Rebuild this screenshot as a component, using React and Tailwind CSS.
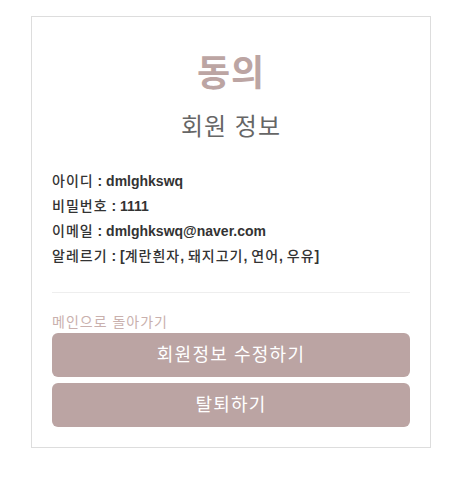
function K({ children }) {
  // Korean runs: a touch wider and lighter than the bold latin values
  return <span className="font-medium tracking-[1px]">{children}</span>
}

export default function App() {
  const font = { fontFamily: '"Liberation Sans", "Noto Sans CJK KR", sans-serif' }
  return (
    <div className="min-h-[498px] bg-white" style={font}>
      <div className="ml-[31px] mt-4 w-[400px] border border-[#dddddd] px-5 pt-[33px] pb-5">
        <h1 className="text-center text-[36px] font-bold leading-[48px] tracking-[1px] text-[#bca5a3]">동의</h1>
        <h2 className="mt-[13px] text-center text-[24px] leading-[32px] tracking-[1px] text-[#666666]">회원 정보</h2>

        <div className="mt-[26px] text-[14px] font-bold leading-[25px] text-[#333333]">
          <p><K>아이디</K> : dmlghkswq</p>
          <p><K>비밀번호</K> : 1111</p>
          <p><K>이메일</K> : dmlghkswq@naver.com</p>
          <p>
            <K>알레르기</K> : [<K>계란흰자</K>, <K>돼지고기</K>, <K>연어</K>, <K>우유</K>]
          </p>
        </div>

        <hr className="mt-[23px] border-t border-[#eeeeee]" />

        <a href="#" className="mt-[19px] block text-[14px] leading-[20px] tracking-[1px] text-[#c9b0ad]">
          메인으로 돌아가기
        </a>

        <div className="mt-px flex flex-col gap-1.5">
          <button className="h-11 w-full rounded-md bg-[#bba4a3] text-[18px] tracking-[1.2px] text-white">
            회원정보 수정하기
          </button>
          <button className="h-11 w-full rounded-md bg-[#bba4a3] text-[18px] tracking-[1.2px] text-white">
            탈퇴하기
          </button>
        </div>
      </div>
    </div>
  )
}
